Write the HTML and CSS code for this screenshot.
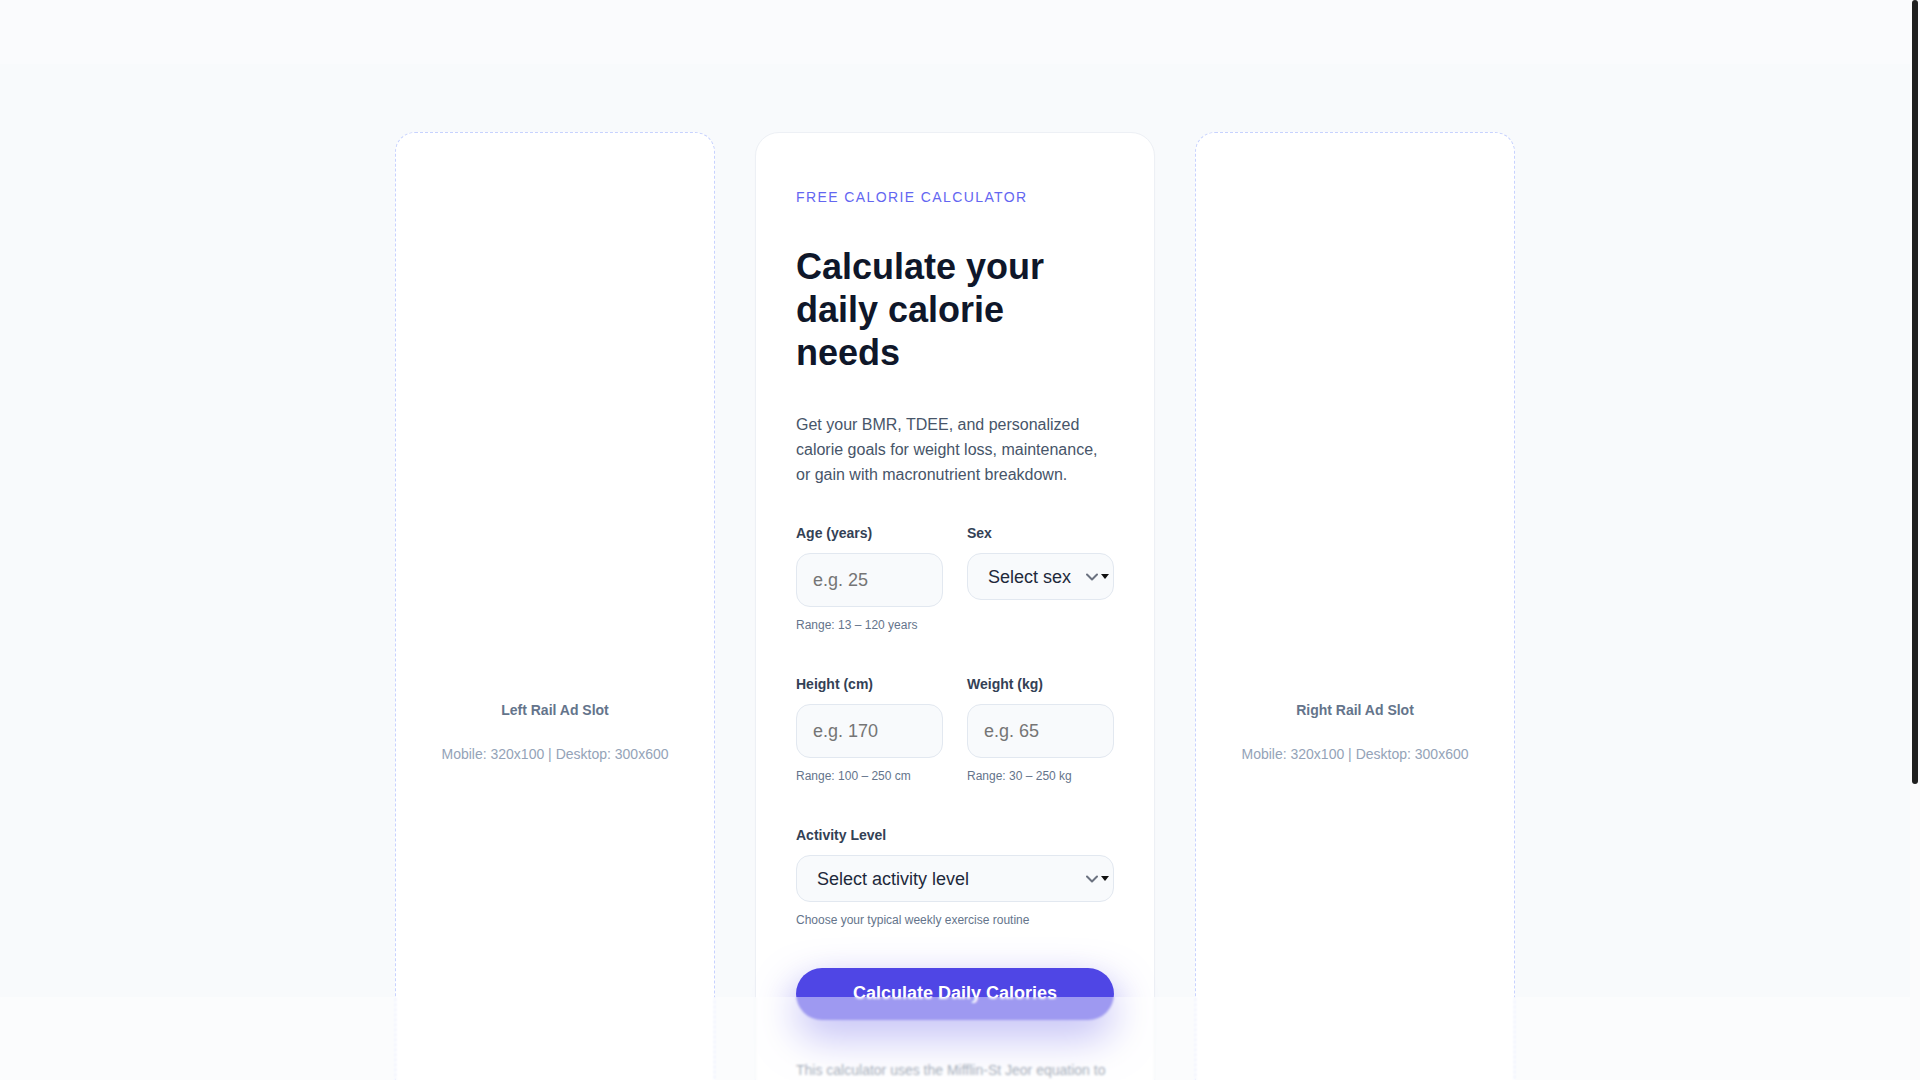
FILE: index.html
```html
<!DOCTYPE html>
<html lang="en">
<head>
<meta charset="utf-8">
<title>Free Calorie Calculator</title>
<link rel="stylesheet" href="styles.css">
</head>
<body>
<div class="topbar"></div>
<main class="layout">
  <aside class="ad-slot">
    <div class="ad-inner">
      <p class="ad-title">Left Rail Ad Slot</p>
      <p class="ad-size">Mobile: 320x100 | Desktop: 300x600</p>
    </div>
  </aside>

  <section class="calc-card">
    <p class="eyebrow">FREE CALORIE CALCULATOR</p>
    <h1 class="title">Calculate your daily calorie needs</h1>
    <p class="lead">Get your BMR, TDEE, and personalized calorie goals for weight loss, maintenance, or gain with macronutrient breakdown.</p>

    <form class="form">
      <div class="row two">
        <div class="field">
          <label class="label" for="age">Age (years)</label>
          <input class="input" id="age" type="text" placeholder="e.g. 25">
          <p class="helper">Range: 13 – 120 years</p>
        </div>
        <div class="field">
          <label class="label" for="sex">Sex</label>
          <div class="select-wrap">
            <select class="select" id="sex">
              <option>Select sex</option>
              <option>Male</option>
              <option>Female</option>
            </select>
            <svg class="chev" width="12" height="8" viewBox="0 0 12 8"><path d="M1 1.5 L6 6.5 L11 1.5" fill="none" stroke="#6b7280" stroke-width="2" stroke-linecap="round" stroke-linejoin="round"/></svg>
            <svg class="tri" width="8" height="5" viewBox="0 0 8 5"><path d="M0 0 H8 L4 5 Z" fill="#111111"/></svg>
          </div>
        </div>
      </div>

      <div class="row two">
        <div class="field">
          <label class="label" for="height">Height (cm)</label>
          <input class="input" id="height" type="text" placeholder="e.g. 170">
          <p class="helper">Range: 100 – 250 cm</p>
        </div>
        <div class="field">
          <label class="label" for="weight">Weight (kg)</label>
          <input class="input" id="weight" type="text" placeholder="e.g. 65">
          <p class="helper">Range: 30 – 250 kg</p>
        </div>
      </div>

      <div class="row">
        <div class="field">
          <label class="label" for="activity">Activity Level</label>
          <div class="select-wrap">
            <select class="select" id="activity">
              <option>Select activity level</option>
              <option>Sedentary</option>
              <option>Lightly active</option>
              <option>Moderately active</option>
              <option>Very active</option>
            </select>
            <svg class="chev" width="12" height="8" viewBox="0 0 12 8"><path d="M1 1.5 L6 6.5 L11 1.5" fill="none" stroke="#6b7280" stroke-width="2" stroke-linecap="round" stroke-linejoin="round"/></svg>
            <svg class="tri" width="8" height="5" viewBox="0 0 8 5"><path d="M0 0 H8 L4 5 Z" fill="#111111"/></svg>
          </div>
          <p class="helper">Choose your typical weekly exercise routine</p>
        </div>
      </div>

      <button class="btn" type="button">Calculate Daily Calories</button>
    </form>

    <p class="note">This calculator uses the Mifflin-St Jeor equation to estimate your basal metabolic rate and total daily energy expenditure. Results are estimates and are not a substitute for professional medical advice.</p>
  </section>

  <aside class="ad-slot">
    <div class="ad-inner">
      <p class="ad-title">Right Rail Ad Slot</p>
      <p class="ad-size">Mobile: 320x100 | Desktop: 300x600</p>
    </div>
  </aside>
</main>
<div class="bottombar"></div>
<div class="scrollbar" aria-hidden="true"><div class="scroll-thumb"></div></div>
</body>
</html>
```

FILE: styles.css
```css
* { box-sizing: border-box; }

html { background: #f8fafc; }

body {
  margin: 0;
  padding-right: 10px;
  background: #f8fafc;
  font-family: "Liberation Sans", Arial, sans-serif;
  color: #0f172a;
}

.topbar {
  position: fixed;
  top: 0;
  left: 0;
  right: 10px;
  height: 64px;
  background: rgba(255, 255, 255, 0.3);
  z-index: 5;
}

.bottombar {
  position: fixed;
  left: 0;
  right: 10px;
  bottom: 0;
  height: 83px;
  background: rgba(255, 255, 255, 0.45);
  -webkit-backdrop-filter: blur(1px);
  backdrop-filter: blur(1px);
  z-index: 5;
}

/* page scrollbar (drawn, since the capture hides native ones) */
.scrollbar {
  position: fixed;
  top: 0;
  right: 0;
  width: 10px;
  height: 100%;
  background: #fbfbfc;
  z-index: 10;
}

.scroll-thumb {
  margin: 0 2px;
  height: 784px;
  border-radius: 6px;
  background: #1f1f1f;
}

.layout {
  display: flex;
  justify-content: center;
  align-items: stretch;
  gap: 40px;
  padding: 132px 0 156px;
}

.ad-slot {
  width: 320px;
  flex: 0 0 320px;
  background: #ffffff;
  border: 1px dashed #c7d2fe;
  border-radius: 20px;
  display: flex;
  align-items: center;
  justify-content: center;
  text-align: center;
}

.ad-inner {
  display: flex;
  flex-direction: column;
  gap: 24px;
}

.ad-title {
  margin: 0;
  font-size: 14px;
  line-height: 20px;
  font-weight: 700;
  color: #64748b;
}

.ad-size {
  margin: 0;
  font-size: 14px;
  line-height: 20px;
  color: #94a3b8;
}

.calc-card {
  width: 400px;
  flex: 0 0 400px;
  min-height: 1200px;
  background: #ffffff;
  border: 1px solid #edf0f5;
  border-radius: 24px;
  padding: 54px 40px 56px;
  box-shadow: 0 1px 2px rgba(15, 23, 42, 0.02);
}

.eyebrow {
  margin: 0;
  font-size: 14px;
  line-height: 20px;
  letter-spacing: 0.1em;
  color: #6366f1;
}

.title {
  margin: 38px 0 0;
  font-size: 36px;
  line-height: 43.2px;
  font-weight: 700;
  color: #0f172a;
}

.lead {
  margin: 37px 0 0;
  font-size: 16px;
  line-height: 25px;
  color: #475569;
}

.form {
  margin-top: 36px;
  display: flex;
  flex-direction: column;
  gap: 40px;
}

.row.two {
  display: grid;
  grid-template-columns: 1fr 1fr;
  column-gap: 24px;
  align-items: start;
}

.field {
  display: flex;
  flex-direction: column;
  min-width: 0;
}

.label {
  display: block;
  font-size: 14px;
  line-height: 20px;
  font-weight: 700;
  color: #334155;
  margin-bottom: 10px;
}

.input {
  width: 100%;
  height: 54px;
  padding: 1px 16px 0;
  border: 1px solid #e2e8f0;
  border-radius: 14px;
  background: #f8fafc;
  font-family: "Liberation Sans", Arial, sans-serif;
  font-size: 18px;
  color: #0f172a;
  outline: none;
}

.input::placeholder { color: #757575; }

.select-wrap {
  position: relative;
}

.select {
  width: 100%;
  height: 47px;
  padding: 1px 40px 0 20px;
  border: 1px solid #e2e8f0;
  border-radius: 14px;
  background: #f8fafc;
  font-family: "Liberation Sans", Arial, sans-serif;
  font-size: 18px;
  color: #1e293b;
  -webkit-appearance: none;
  appearance: none;
  outline: none;
}

.chev {
  position: absolute;
  right: 16px;
  top: 20px;
  pointer-events: none;
}

.tri {
  position: absolute;
  right: 5px;
  top: 21px;
  pointer-events: none;
}

.helper {
  margin: 9px 0 0;
  font-size: 12px;
  line-height: 18px;
  color: #64748b;
}

.btn {
  margin-top: -1px;
  width: 100%;
  height: 52px;
  border: none;
  border-radius: 999px;
  background: #4f46e5;
  color: #ffffff;
  font-family: "Liberation Sans", Arial, sans-serif;
  font-size: 18px;
  font-weight: 700;
  box-shadow: 0 18px 40px rgba(79, 70, 229, 0.6);
  cursor: pointer;
}

.note {
  margin: 40px 0 0;
  font-size: 14px;
  line-height: 21px;
  color: #5b6b82;
}
```
